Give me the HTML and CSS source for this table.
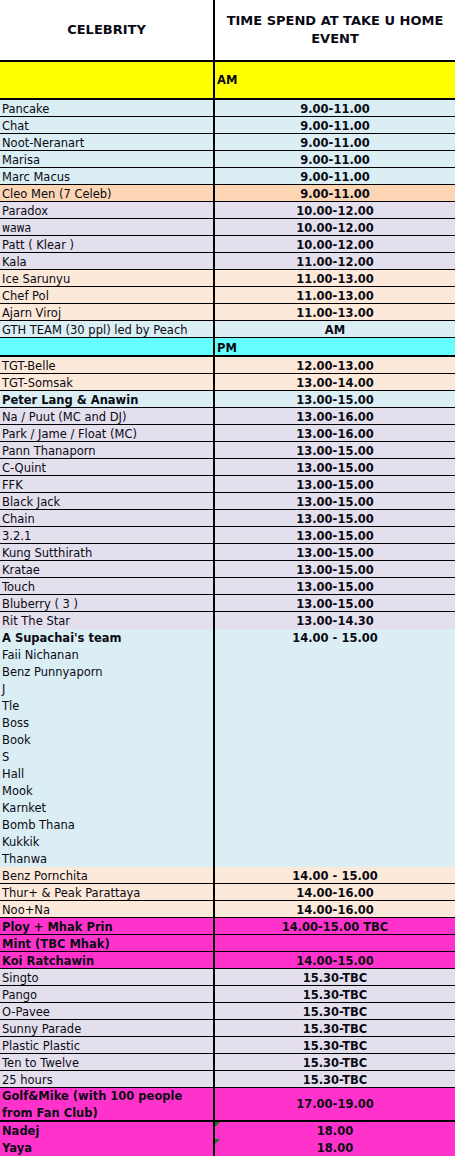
FILE: index.html
```html
<!DOCTYPE html>
<html lang="en">
<head>
<meta charset="utf-8">
<title>Take U Home Event</title>
<link rel="stylesheet" href="styles.css">
</head>
<body>
<div class="sheet">
  <div class="row head">
    <div class="c1">CELEBRITY</div>
    <div class="c2">TIME SPEND AT TAKE U HOME EVENT</div>
  </div>
  <div class="row section yellow">
    <div class="c1"></div>
    <div class="c2 left">AM</div>
  </div>

  <div class="row blue"><div class="c1">Pancake</div><div class="c2">9.00-11.00</div></div>
  <div class="row blue"><div class="c1">Chat</div><div class="c2">9.00-11.00</div></div>
  <div class="row blue"><div class="c1">Noot-Neranart</div><div class="c2">9.00-11.00</div></div>
  <div class="row blue"><div class="c1">Marisa</div><div class="c2">9.00-11.00</div></div>
  <div class="row blue"><div class="c1">Marc Macus</div><div class="c2">9.00-11.00</div></div>
  <div class="row peach"><div class="c1">Cleo Men (7 Celeb)</div><div class="c2">9.00-11.00</div></div>
  <div class="row lav"><div class="c1">Paradox</div><div class="c2">10.00-12.00</div></div>
  <div class="row lav"><div class="c1">พลพล</div><div class="c2">10.00-12.00</div></div>
  <div class="row lav"><div class="c1">Patt ( Klear )</div><div class="c2">10.00-12.00</div></div>
  <div class="row lav"><div class="c1">Kala</div><div class="c2">11.00-12.00</div></div>
  <div class="row apricot"><div class="c1">Ice Sarunyu</div><div class="c2">11.00-13.00</div></div>
  <div class="row apricot"><div class="c1">Chef Pol</div><div class="c2">11.00-13.00</div></div>
  <div class="row apricot"><div class="c1">Ajarn Viroj</div><div class="c2">11.00-13.00</div></div>
  <div class="row blue"><div class="c1">GTH TEAM (30 ppl) led by Peach</div><div class="c2">AM</div></div>

  <div class="row pm cyan">
    <div class="c1"></div>
    <div class="c2 left">PM</div>
  </div>

  <div class="row apricot"><div class="c1">TGT-Belle</div><div class="c2">12.00-13.00</div></div>
  <div class="row apricot"><div class="c1">TGT-Somsak</div><div class="c2">13.00-14.00</div></div>
  <div class="row blue"><div class="c1 bold">Peter Lang &amp; Anawin</div><div class="c2">13.00-15.00</div></div>
  <div class="row lav"><div class="c1">Na / Puut (MC and DJ)</div><div class="c2">13.00-16.00</div></div>
  <div class="row lav"><div class="c1">Park / Jame / Float (MC)</div><div class="c2">13.00-16.00</div></div>
  <div class="row lav"><div class="c1">Pann Thanaporn</div><div class="c2">13.00-15.00</div></div>
  <div class="row lav"><div class="c1">C-Quint</div><div class="c2">13.00-15.00</div></div>
  <div class="row lav"><div class="c1">FFK</div><div class="c2">13.00-15.00</div></div>
  <div class="row lav"><div class="c1">Black Jack</div><div class="c2">13.00-15.00</div></div>
  <div class="row lav"><div class="c1">Chain</div><div class="c2">13.00-15.00</div></div>
  <div class="row lav"><div class="c1">3.2.1</div><div class="c2">13.00-15.00</div></div>
  <div class="row lav"><div class="c1">Kung Sutthirath</div><div class="c2">13.00-15.00</div></div>
  <div class="row lav"><div class="c1">Kratae</div><div class="c2">13.00-15.00</div></div>
  <div class="row lav"><div class="c1">Touch</div><div class="c2">13.00-15.00</div></div>
  <div class="row lav"><div class="c1">Bluberry ( 3 )</div><div class="c2">13.00-15.00</div></div>
  <div class="row lav flat"><div class="c1">Rit The Star</div><div class="c2">13.00-14.30</div></div>

  <div class="row blue flat"><div class="c1 bold">A Supachai's team</div><div class="c2">14.00 - 15.00</div></div>
  <div class="row blue flat"><div class="c1">Faii Nichanan</div><div class="c2"></div></div>
  <div class="row blue flat"><div class="c1">Benz Punnyaporn</div><div class="c2"></div></div>
  <div class="row blue flat"><div class="c1">J</div><div class="c2"></div></div>
  <div class="row blue flat"><div class="c1">Tle</div><div class="c2"></div></div>
  <div class="row blue flat"><div class="c1">Boss</div><div class="c2"></div></div>
  <div class="row blue flat"><div class="c1">Book</div><div class="c2"></div></div>
  <div class="row blue flat"><div class="c1">S</div><div class="c2"></div></div>
  <div class="row blue flat"><div class="c1">Hall</div><div class="c2"></div></div>
  <div class="row blue flat"><div class="c1">Mook</div><div class="c2"></div></div>
  <div class="row blue flat"><div class="c1">Karnket</div><div class="c2"></div></div>
  <div class="row blue flat"><div class="c1">Bomb Thana</div><div class="c2"></div></div>
  <div class="row blue flat"><div class="c1">Kukkik</div><div class="c2"></div></div>
  <div class="row blue flat"><div class="c1">Thanwa</div><div class="c2"></div></div>

  <div class="row apricot"><div class="c1">Benz Pornchita</div><div class="c2">14.00 - 15.00</div></div>
  <div class="row apricot"><div class="c1">Thur+ &amp; Peak Parattaya</div><div class="c2">14.00-16.00</div></div>
  <div class="row apricot"><div class="c1">Noo+Na</div><div class="c2">14.00-16.00</div></div>
  <div class="row pink"><div class="c1 bold">Ploy + Mhak Prin</div><div class="c2">14.00-15.00 TBC</div></div>
  <div class="row pink"><div class="c1 bold">Mint (TBC Mhak)</div><div class="c2"></div></div>
  <div class="row pink"><div class="c1 bold">Koi Ratchawin</div><div class="c2">14.00-15.00</div></div>
  <div class="row lav"><div class="c1">Singto</div><div class="c2">15.30-TBC</div></div>
  <div class="row lav"><div class="c1">Pango</div><div class="c2">15.30-TBC</div></div>
  <div class="row lav"><div class="c1">O-Pavee</div><div class="c2">15.30-TBC</div></div>
  <div class="row lav"><div class="c1">Sunny Parade</div><div class="c2">15.30-TBC</div></div>
  <div class="row lav"><div class="c1">Plastic Plastic</div><div class="c2">15.30-TBC</div></div>
  <div class="row lav"><div class="c1">Ten to Twelve</div><div class="c2">15.30-TBC</div></div>
  <div class="row lav"><div class="c1">25 hours</div><div class="c2">15.30-TBC</div></div>
  <div class="row pink tall">
    <div class="c1 bold">Golf&amp;Mike (with 100 people<br>from Fan Club)</div>
    <div class="c2">17.00-19.00</div>
  </div>
  <div class="row pink flat"><div class="c1 bold">Nadej</div><div class="c2 flag">18.00</div></div>
  <div class="row pink flat"><div class="c1 bold">Yaya</div><div class="c2 flag">18.00</div></div>
</div>
</body>
</html>
```

FILE: styles.css
```css
body {
  margin: 0;
  background: #ffffff;
  font-family: "DejaVu Sans", "Noto Sans Thai", "Noto Sans", sans-serif;
  font-size: 11.5px;
  color: #0a0a14;
}

.sheet {
  width: 455px;
}

.row {
  display: grid;
  grid-template-columns: 215px 240px;
  border-bottom: 1px solid #000;
}

.c1 {
  border-right: 2px solid #000;
  padding-left: 2px;
  height: 16px;
  line-height: 18px;
  white-space: nowrap;
}

.c2 {
  position: relative;
  height: 16px;
  line-height: 18px;
  text-align: center;
  font-weight: bold;
  white-space: nowrap;
}

.bold {
  font-weight: bold;
}

.left {
  text-align: left;
  padding-left: 2px;
}

/* header */
.head {
  background: #fff;
  border-bottom-width: 2px;
}

.head > div {
  height: 60px;
  display: flex;
  align-items: center;
  justify-content: center;
  text-align: center;
  font-weight: bold;
  font-size: 13px;
  line-height: 18px;
  white-space: normal;
  padding-left: 0;
}

/* section rows */
.section {
  border-bottom-width: 2px;
}

.section > div {
  height: 36px;
  line-height: 36px;
}

.pm {
  border-bottom-width: 2px;
}

.pm > div {
  height: 17px;
  line-height: 20px;
}

/* rows without grid line under them */
.flat {
  border-bottom: 0;
}

.flat > div {
  height: 17px;
}

/* two-line row */
.tall {
  border-bottom-width: 2px;
}

.tall > .c1 {
  height: 32px;
  line-height: 17px;
  white-space: normal;
}

.tall > .c2 {
  height: 32px;
  line-height: 32px;
}

/* excel error indicator */
.flag::before {
  content: "";
  position: absolute;
  left: 0;
  top: 0;
  width: 0;
  height: 0;
  border-top: 5px solid #0b7d16;
  border-right: 5px solid transparent;
}

/* fills */
.yellow { background: #ffff00; }
.cyan { background: #66ffff; }
.blue { background: #daeef3; }
.lav { background: #e4dfec; }
.peach { background: #fcd5b4; }
.apricot { background: #fde9d9; }
.pink { background: #ff33cc; }
```
